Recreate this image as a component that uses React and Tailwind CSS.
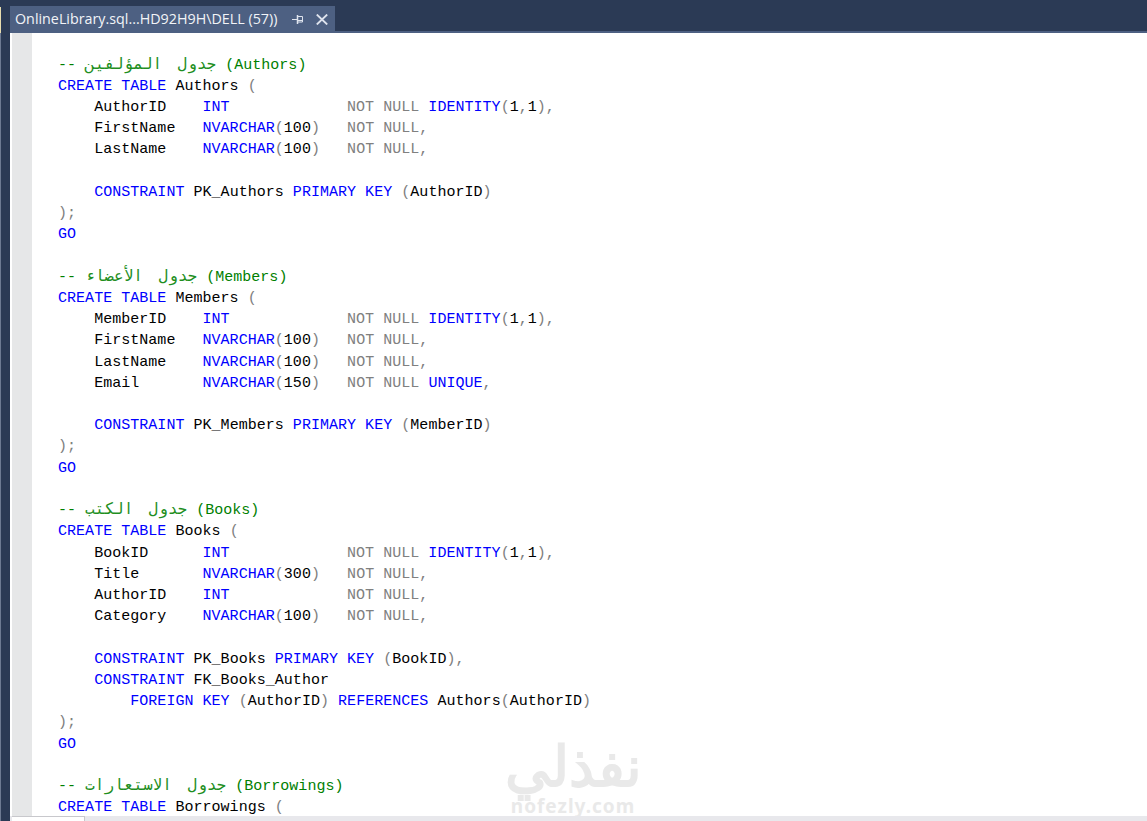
import React from 'react';

const K = 'text-[#0000ff]';
const G = 'text-[#808080]';
const C = 'text-[#008000]';
const T = 'text-black';

// arabic part is stretched to the width the editor's mono font gives it
const comment = (arabic, width, latin) => [
  ['-- ', C],
  [arabic, 'inline-block align-top text-[16px] tracking-normal text-[#1f8f1f] [text-align-last:justify] ' + width, 'rtl'],
  [' ' + latin, C],
];
const createTable = (name) => [['CREATE TABLE', K], [' ' + name + ' ', T], ['(', G]];

const column = (name, type, size, extra) => {
  const pad = name.padEnd(12, ' ');
  const tokens = [['    ' + pad, T], [type, K]];
  if (size) tokens.push(['(', G], [size, T], [')', G], ['   ', T]);
  else tokens.push(['             ', T]);
  tokens.push(['NOT NULL', G]);
  if (extra === 'identity') {
    tokens.push([' ', T], ['IDENTITY', K], ['(', G], ['1', T], [',', G], ['1', T], ['),', G]);
  } else if (extra === 'unique') {
    tokens.push([' ', T], ['UNIQUE', K], [',', G]);
  } else {
    tokens.push([',', G]);
  }
  return tokens;
};

const primaryKey = (name, col, trailing) => [
  ['    ', T], ['CONSTRAINT', K], [' ' + name + ' ', T], ['PRIMARY KEY', K], [' ', T], ['(', G], [col, T], [trailing ? '),' : ')', G],
];

const lines = [
  comment('جدول المؤلفين', 'w-[131px]', '(Authors)'),
  createTable('Authors'),
  column('AuthorID', 'INT', null, 'identity'),
  column('FirstName', 'NVARCHAR', '100'),
  column('LastName', 'NVARCHAR', '100'),
  [],
  primaryKey('PK_Authors', 'AuthorID'),
  [[');', G]],
  [['GO', K]],
  [],
  comment('جدول الأعضاء', 'w-[112px]', '(Members)'),
  createTable('Members'),
  column('MemberID', 'INT', null, 'identity'),
  column('FirstName', 'NVARCHAR', '100'),
  column('LastName', 'NVARCHAR', '100'),
  column('Email', 'NVARCHAR', '150', 'unique'),
  [],
  primaryKey('PK_Members', 'MemberID'),
  [[');', G]],
  [['GO', K]],
  [],
  comment('جدول الكتب', 'w-[102px]', '(Books)'),
  createTable('Books'),
  column('BookID', 'INT', null, 'identity'),
  column('Title', 'NVARCHAR', '300'),
  column('AuthorID', 'INT'),
  column('Category', 'NVARCHAR', '100'),
  [],
  primaryKey('PK_Books', 'BookID', true),
  [['    ', T], ['CONSTRAINT', K], [' FK_Books_Author', T]],
  [['        ', T], ['FOREIGN KEY', K], [' ', T], ['(', G], ['AuthorID', T], [')', G], [' ', T], ['REFERENCES', K], [' Authors', T], ['(', G], ['AuthorID', T], [')', G]],
  [[');', G]],
  [['GO', K]],
  [],
  comment('جدول الاستعارات', 'w-[141px]', '(Borrowings)'),
  createTable('Borrowings'),
];

export default function App() {
  return (
    <div className="h-[821px] w-[1147px] overflow-hidden flex flex-col bg-[#2b3a55] relative">
      {/* sliver of the window behind */}
      <div className="absolute left-0 top-[7px] h-[26px] w-[1px] bg-[#e8dcae]" />
      <div className="absolute left-0 top-[33px] bottom-0 w-[1px] bg-[#6d7a92]" />

      {/* tab strip */}
      <div className="h-[31px] shrink-0 flex items-end pl-[10px]">
        <div className="h-[25px] w-[325px] bg-[#4d6082] text-[#f2f4f8] flex items-center pl-[5px] text-[14.3px] font-['Open_Sans','Noto_Sans',sans-serif] whitespace-nowrap">
          <span className="w-[277px]">OnlineLibrary.sql...HD92H9H\DELL (57))</span>
          <svg width="11" height="9" viewBox="0 0 11 9" className="mt-[1px]" fill="none" stroke="#dfe4ee" strokeWidth="1">
            <path d="M0 4.5H5" />
            <path d="M5.5 0V9" strokeWidth="1.5" />
            <path d="M6 1.5H10.5V7H6" />
            <path d="M6 5.5H10.5" />
          </svg>
          <svg width="12" height="11" viewBox="0 0 12 11" className="ml-[13px] mt-[1px]" fill="none" stroke="#dfe4ee" strokeWidth="1.8">
            <path d="M0.8 0.5L11.2 10.5" />
            <path d="M11.2 0.5L0.8 10.5" />
          </svg>
        </div>
      </div>
      <div className="h-[2px] shrink-0 ml-[10px] bg-[#4d6082]" />

      {/* editor */}
      <div className="flex-1 flex min-h-0 ml-[10px] bg-white">
        <div className="w-[22px] shrink-0 bg-[#e6e7e8] border-l-2 border-white" />
        <div className="flex-1 min-w-0 pt-[21.5px] pl-[26px] font-['Liberation_Mono','DejaVu_Sans_Mono',monospace] text-[15px] tracking-[0.03px] leading-[21.23px]">
          {lines.map((tokens, i) => (
            <div key={i} className="h-[21.23px] whitespace-pre">
              {tokens.map(([text, color, dir], j) => (
                <span key={j} dir={dir} className={color}>{text}</span>
              ))}
            </div>
          ))}
        </div>
      </div>

      {/* horizontal scrollbar */}
      <div className="h-[5px] shrink-0 ml-[10px] bg-[#e8e8ec] flex relative z-10">
        <div className="ml-[2px] w-[73px] bg-white border-t border-r border-[#c8c8cc]" />
      </div>

      {/* watermark */}
      <div className="absolute left-[498px] top-[733px] w-[150px] text-center text-[#e9e9e9] font-['Noto_Sans',sans-serif] font-bold">
        <div dir="rtl" className="text-[56px] leading-[62px]">نفذلي</div>
        <div className="text-[19px] leading-[19px] tracking-[1px] mt-[2px]">nofezly.com</div>
      </div>
    </div>
  );
}
